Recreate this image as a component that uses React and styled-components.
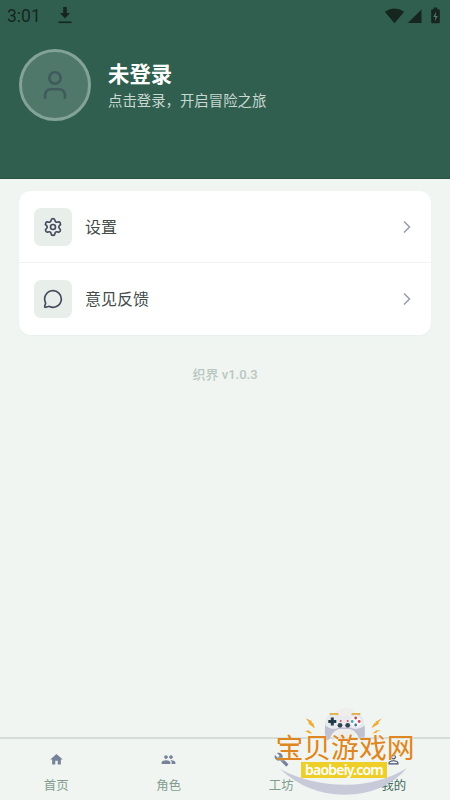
import React from 'react';
import styled, { createGlobalStyle } from 'styled-components';
import { ChevronRight, MessageCircle, Settings, User } from 'lucide-react';
import { MdBuild, MdHome, MdPeople, MdPersonOutline } from 'react-icons/md';

const GlobalStyle = createGlobalStyle`
    * {
        box-sizing: border-box;
    }
    body {
        margin: 0;
        background: #f0f5f2;
        font-family: Roboto, "Noto Sans CJK SC", sans-serif;
    }
`;

const Page = styled.div`
    position: relative;
    width: 450px;
    height: 800px;
    display: flex;
    flex-direction: column;
    overflow: hidden;
    background: #f0f5f2;
`;

const Header = styled.header`
    height: 179px;
    background: #305f50;
    border-bottom: 1px solid #265344;
`;

const StatusBar = styled.div`
    height: 32px;
    padding: 0 8px 0 7px;
    display: flex;
    align-items: center;
    color: #15261f;
`;

const Clock = styled.span`
    width: 51px;
    font-size: 17.5px;
    line-height: 32px;
`;

const StatusIcons = styled.div`
    display: flex;
    align-items: center;
    margin-left: auto;
    height: 30px;
`;

const Profile = styled.div`
    display: flex;
    align-items: center;
    padding: 17px 19px;
`;

const Avatar = styled.div`
    width: 72px;
    height: 72px;
    display: flex;
    align-items: center;
    justify-content: center;
    border: 3px solid #83a396;
    border-radius: 50%;
    background: #4f786b;
    color: #415a5c;
`;

const ProfileText = styled.div`
    margin-left: 17px;
    padding-top: 4px;
`;

const Name = styled.h1`
    margin: 0;
    font-size: 21.4px;
    font-weight: 700;
    line-height: 28px;
    color: #fff;
`;

const Hint = styled.p`
    margin: 0;
    font-size: 14.4px;
    line-height: 25px;
    color: #c9d8d1;
`;

const Card = styled.section`
    width: 412px;
    margin: 12px 19px 0;
    border-radius: 12px;
    background: #fff;
    box-shadow: 0 1px 2px rgba(48, 95, 80, 0.04);
`;

const MenuRow = styled.div`
    height: 71px;
    padding: 0 14px 0 15px;
    display: flex;
    align-items: center;
    color: #9a9fab;

    & + & {
        height: 73px;
        border-top: 1px solid #f0f3f1;
    }
`;

const IconBox = styled.div`
    width: 38px;
    height: 38px;
    display: flex;
    align-items: center;
    justify-content: center;
    border-radius: 7px;
    background: #e8eeea;
    color: #444b5c;
`;

const MenuLabel = styled.span`
    flex: 1;
    margin-left: 13px;
    padding-top: 2px;
    font-size: 16px;
    line-height: 24px;
    color: #434c48;
`;

const Version = styled.p`
    margin: 30px 0 0;
    font-size: 13px;
    font-weight: 500;
    line-height: 20px;
    text-align: center;
    color: #b8c8c0;
`;

const TabBar = styled.nav`
    height: 63px;
    margin-top: auto;
    display: flex;
    border-top: 2px solid #d5ddd9;
`;

const Tab = styled.div`
    flex: 1;
    display: flex;
    flex-direction: column;
    align-items: center;
    padding-top: 13px;
    color: ${props => props.$active ? '#46506a' : '#77839b'};
`;

const TabLabel = styled.span`
    margin-top: 10px;
    font-size: 12.4px;
    line-height: 18px;
    color: ${props => props.$active ? '#416b59' : '#839c90'};
`;

const Watermark = styled.div`
    position: absolute;
    left: 270px;
    top: 705px;
    width: 150px;
    height: 95px;
    display: flex;
    flex-direction: column;
    align-items: center;
`;

const WatermarkArt = styled.svg`
    position: absolute;
    left: 0;
    top: 0;
`;

const SiteName = styled.div`
    position: relative;
    margin-top: 31px;
    font-size: 27.8px;
    line-height: 26px;
    white-space: nowrap;
    color: #de8524;
    text-shadow: 0 0 2px #fff3d8;
`;

const SiteUrl = styled.div`
    position: relative;
    left: -1px;
    width: 86px;
    height: 16px;
    background: #edcf28;
    font-family: "Noto Sans", sans-serif;
    font-size: 14px;
    font-weight: 600;
    letter-spacing: -0.8px;
    line-height: 15px;
    text-align: center;
    color: #fff;
`;

const menu = [
    { label: '设置', Icon: Settings },
    { label: '意见反馈', Icon: MessageCircle },
];

const tabs = [
    { label: '首页', Icon: MdHome },
    { label: '角色', Icon: MdPeople },
    { label: '工坊', Icon: MdBuild },
    { label: '我的', Icon: MdPersonOutline, active: true },
];

const DownloadIcon = () => (
    <svg width="14" height="18" viewBox="0 0 14 18" fill="currentColor">
        <path d="M5.2 0h3.6v6H12l-5 5.500-5-5.500h3.2z" />
        <path d="M.5 14.500h13v1.6H.5z" />
    </svg>
);

const SignalIcons = () => (
    <svg width="58" height="18" viewBox="0 0 58 18" fill="currentColor">
        <path d="M.8 4.7Q10.5-1.7 20.200 4.700L10.500 16.300z" />
        <path d="M37.500 2.500v13.600H23.800z" />
        <path d="M49.700 .5h3.600v1.700h1.500q1 0 1 1v12q0 1-1 1h-6.600q-1 0-1-1V3.200q0-1 1-1h1.500z" />
        <path d="M52.200 4.500l-3 5.500h2.200l-.6 4.500 3-5.500h-2.200z" fill="#527568" />
    </svg>
);

const SiteWatermark = () => (
    <Watermark>
        <WatermarkArt width="150" height="95" viewBox="0 0 150 95">
            <path d="M10 64Q38 90 75 89.700Q115 89 137 63Q110 79.500 77 79.700Q40 80 10 64z" fill="#c8cada" />
            <circle cx="75" cy="18" r="15" fill="#eeeeed" />
            <path d="M60.500 9h7M82.500 9h7" stroke="#e4af45" strokeWidth="2.200" strokeLinecap="round" />
            <path d="M57.500 12Q62 8 69 11H80.500Q88 8 92 12Q96 20 94.500 35Q91 37 88 31Q84 24 79 24H70Q65 24 61 31Q58 37 55.500 35Q53.500 20 57.500 12z" fill="#bfc1d0" />
            <path d="M57.500 12Q62 8 69 11H80.500Q88 8 92 12Q95 17 94 21Q88 26 80 22.500H69Q62 26 56 21Q54.500 17 57.500 12z" fill="#e9eaf0" />
            <path d="M58.300 16.500h8M62.300 12.500v8" stroke="#233b49" strokeWidth="3" />
            <circle cx="70" cy="20.300" r="2.400" fill="#344351" />
            <circle cx="77.700" cy="20.300" r="2.400" fill="#344351" />
            <circle cx="70.700" cy="16" r="1" fill="#d04e59" />
            <circle cx="77.700" cy="16" r="1" fill="#d04e59" />
            <circle cx="85.700" cy="16.500" r="5.300" fill="#f5f6f9" />
            <circle cx="85.700" cy="13" r="1.400" fill="#cf4552" />
            <circle cx="82.200" cy="16.500" r="1.400" fill="#4aa5bb" />
            <circle cx="89.200" cy="16.500" r="1.400" fill="#cf4552" />
            <circle cx="85.700" cy="20" r="1.400" fill="#46798d" />
            <path d="M35.700 13.300l6 2.700v2.200l1.500-.3 1.700 5.500-6.700-4.800.8-1.200zM34.500 26.200l4-1 1.200 1 2.700 2.300-5-.5.600-1z" fill="#edac32" />
            <path d="M112 13.300l-6.500 3.500v1.700l-1.500-.2-2.500 5 7.500-4.500-.7-1.300zM111 25.500l-5-.2-1 1.200-3 2 5-.7-.5-1z" fill="#edac32" />
        </WatermarkArt>
        <SiteName>宝贝游戏网</SiteName>
        <SiteUrl>baobeiy.com</SiteUrl>
    </Watermark>
);

const App = () => {
    return (
        <>
            <GlobalStyle />
            <Page>
                <Header>
                    <StatusBar>
                        <Clock>3:01</Clock>
                        <DownloadIcon />
                        <StatusIcons>
                            <SignalIcons />
                        </StatusIcons>
                    </StatusBar>
                    <Profile>
                        <Avatar>
                            <User size={34} strokeWidth={1.9} />
                        </Avatar>
                        <ProfileText>
                            <Name>未登录</Name>
                            <Hint>点击登录，开启冒险之旅</Hint>
                        </ProfileText>
                    </Profile>
                </Header>
                <Card>
                    {menu.map(({ label, Icon }) => (
                        <MenuRow key={label}>
                            <IconBox>
                                <Icon size={20} />
                            </IconBox>
                            <MenuLabel>{label}</MenuLabel>
                            <ChevronRight size={20} />
                        </MenuRow>
                    ))}
                </Card>
                <Version>织界 v1.0.3</Version>
                <TabBar>
                    {tabs.map(({ label, Icon, active }) => (
                        <Tab key={label} $active={active}>
                            <Icon size={15} />
                            <TabLabel $active={active}>{label}</TabLabel>
                        </Tab>
                    ))}
                </TabBar>
                <SiteWatermark />
            </Page>
        </>
    )
}

export default App
